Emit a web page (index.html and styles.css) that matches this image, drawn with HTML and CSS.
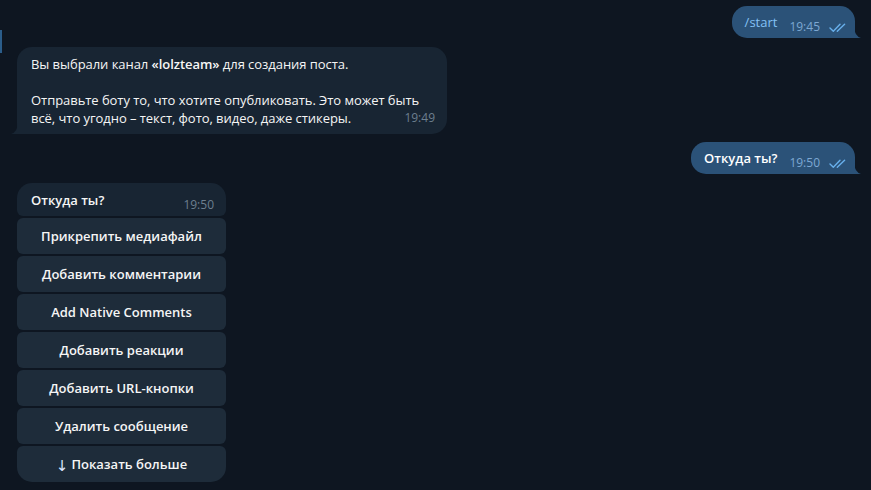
FILE: index.html
```html
<!DOCTYPE html>
<html lang="ru">
<head>
<meta charset="utf-8">
<title>Chat</title>
<link rel="stylesheet" href="styles.css">
</head>
<body>
<div class="edge"></div>
<div class="chat">
  <div class="row row-out first">
    <div class="bubble bubble-out">
      <span class="cmd">/start</span>
      <span class="meta meta-out">19:45<svg class="checks" width="17" height="9" viewBox="0 0 17 9"><path d="M1 5 L4.3 8.2 L11 1.3" /><path d="M8.3 8.2 L15.6 1.3" /></svg></span>
      <svg class="tail tail-out" width="7" height="11" viewBox="0 0 7 11"><path d="M0 0 Q0.5 9 7 11 L0 11 Z"/></svg>
    </div>
  </div>

  <div class="row row-in">
    <div class="bubble bubble-in wide">
      <p class="txt">Вы выбрали канал <b>«lolzteam»</b> для создания поста.</p>
      <p class="txt blank">&nbsp;</p>
      <p class="txt">Отправьте боту то, что хотите опубликовать. Это может быть</p>
      <p class="txt">всё, что угодно – текст, фото, видео, даже стикеры.</p>
      <span class="meta meta-in abs">19:49</span>
      <svg class="tail tail-in" width="7" height="11" viewBox="0 0 7 11"><path d="M7 0 Q6.5 9 0 11 L7 11 Z"/></svg>
    </div>
  </div>

  <div class="row row-out">
    <div class="bubble bubble-out">
      <span class="strong">Откуда ты?</span>
      <span class="meta meta-out">19:50<svg class="checks" width="17" height="9" viewBox="0 0 17 9"><path d="M1 5 L4.3 8.2 L11 1.3" /><path d="M8.3 8.2 L15.6 1.3" /></svg></span>
      <svg class="tail tail-out" width="7" height="11" viewBox="0 0 7 11"><path d="M0 0 Q0.5 9 7 11 L0 11 Z"/></svg>
    </div>
  </div>

  <div class="row row-in">
    <div class="kb-wrap">
      <div class="bubble bubble-in kb-msg">
        <span class="strong">Откуда ты?</span>
        <span class="meta meta-in">19:50</span>
      </div>
      <div class="keyboard">
        <div class="kbtn">Прикрепить медиафайл</div>
        <div class="kbtn">Добавить комментарии</div>
        <div class="kbtn">Add Native Comments</div>
        <div class="kbtn">Добавить реакции</div>
        <div class="kbtn">Добавить URL-кнопки</div>
        <div class="kbtn">Удалить сообщение</div>
        <div class="kbtn last"><span class="arrow">↓</span>Показать больше</div>
      </div>
    </div>
  </div>
</div>
</body>
</html>
```

FILE: styles.css
```css
html, body {
  margin: 0;
  padding: 0;
  background: #0e1621;
  height: 100%;
  overflow: hidden;
}

body {
  font-family: "Open Sans", "Noto Sans", sans-serif;
  font-size: 13px;
  color: #f5f5f5;
  position: relative;
}

.edge {
  position: absolute;
  left: 0;
  top: 30px;
  width: 2px;
  height: 23px;
  background: #2b5d8a;
}

.chat {
  display: flex;
  flex-direction: column;
  padding: 6px 16px 0 17px;
}

.row {
  display: flex;
  margin-top: 9px;
}

.row.first {
  margin-top: 0;
}

.row-out {
  justify-content: flex-end;
}

.row-in {
  justify-content: flex-start;
}

.row-in + .row-out {
  margin-top: 8px;
}

.bubble {
  position: relative;
  line-height: 18px;
}

.bubble-out {
  background: #2b5278;
  color: #ffffff;
  border-radius: 15px 15px 0 15px;
  padding: 7px 9px 7px 13px;
  display: flex;
  align-items: flex-end;
}

.cmd {
  color: #84c1f5;
}

.strong {
  font-weight: 600;
}

b {
  font-weight: 600;
}

.meta {
  font-size: 12px;
  line-height: 18px;
  white-space: nowrap;
  display: inline-flex;
  align-items: center;
  margin-bottom: -5px;
}

.meta-out {
  color: #7da8d3;
  margin-left: 12px;
}

.checks {
  margin-left: 9px;
  fill: none;
  stroke: #68b0ec;
  stroke-width: 1.4;
  stroke-linecap: round;
  stroke-linejoin: round;
}

.tail {
  position: absolute;
  bottom: 0;
}

.tail-out {
  right: -6px;
  fill: #2b5278;
}

.tail-in {
  left: -6px;
  fill: #182533;
}

.bubble-in {
  background: #182533;
  color: #f5f5f5;
}

.wide {
  width: 403px;
  padding: 8px 13px 7px 14px;
  border-radius: 15px 15px 15px 0;
}

.txt {
  margin: 0;
  white-space: nowrap;
  letter-spacing: -0.05px;
}

.meta-in {
  color: #6d7f8f;
}

.abs {
  position: absolute;
  right: 12px;
  bottom: 7px;
  margin: 0;
}

.kb-wrap {
  width: 209px;
  display: flex;
  flex-direction: column;
  gap: 2px;
}

.kb-msg {
  display: flex;
  justify-content: space-between;
  align-items: flex-end;
  padding: 8px 12px 7px 14px;
  border-radius: 15px 15px 6px 6px;
}

.keyboard {
  display: flex;
  flex-direction: column;
  gap: 2px;
}

.kbtn {
  height: 36px;
  display: flex;
  align-items: center;
  justify-content: center;
  background: #1e2c3a;
  border-radius: 6px;
  font-weight: 600;
  color: #f5f5f5;
  white-space: nowrap;
}

.kbtn.last {
  border-radius: 6px 6px 15px 15px;
}

.arrow {
  font-family: "DejaVu Sans", sans-serif;
  font-weight: 400;
  font-size: 15px;
  line-height: 18px;
  margin-right: 3px;
  position: relative;
  top: 2px;
  color: #dce6ff;
}
```
